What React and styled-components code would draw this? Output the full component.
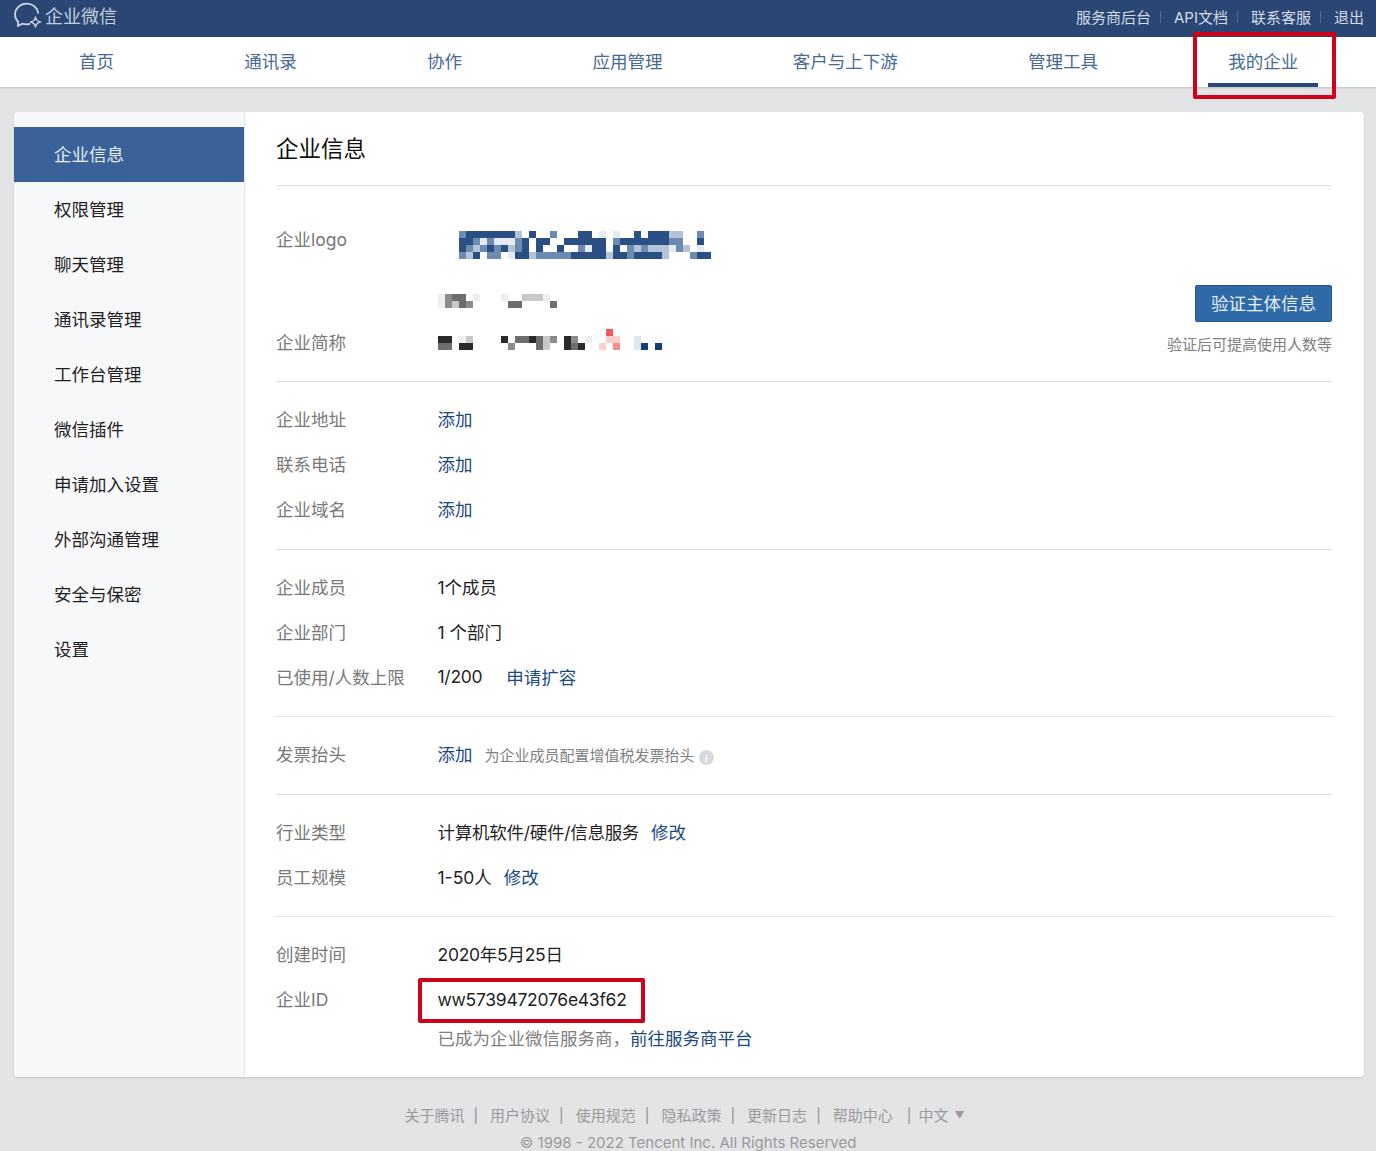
import React from 'react';
import styled, { createGlobalStyle } from 'styled-components';

const GlobalStyle = createGlobalStyle`
  html, body {
    margin: 0;
    padding: 0;
    height: 1151px;
    overflow: hidden;
    background: #e2e4e6;
    font-family: Inter, "Noto Sans CJK SC", sans-serif;
  }
`;

const Page = styled.div`
  height: 1151px;
  overflow: hidden;
`;

const TopBar = styled.div`
  height: 37px;
  box-sizing: border-box;
  background: #2a4674;
  display: flex;
  align-items: center;
  justify-content: space-between;
  padding: 0 12px 5px 14px;
`;

const Brand = styled.div`
  display: flex;
  align-items: center;
  gap: 3px;
  color: #c3cedd;
  font-size: 18px;
  margin-top: -2px;
`;

const TopLinks = styled.div`
  display: flex;
  align-items: center;
  color: #d5dde8;
  font-size: 15px;
`;

const TopSep = styled.span`
  width: 1px;
  height: 12px;
  background: #53698e;
  margin: 2px 13px 0 9px;
`;

const Nav = styled.div`
  height: 50px;
  background: #fff;
  box-shadow: 0 1px 2px rgba(0, 0, 0, 0.16);
  display: flex;
  gap: 90.3px;
  padding-left: 59px;
`;

const Tab = styled.div`
  position: relative;
  padding: 0 20px;
  height: 50px;
  box-sizing: border-box;
  line-height: 49px;
  font-size: 17.5px;
  color: #466a95;
  border-bottom: 4px solid ${props => (props.$active ? '#2a4674' : 'transparent')};
`;

const Annotation = styled.div`
  position: absolute;
  box-sizing: border-box;
  border: 4px solid #d0021b;
  border-radius: 2px;
  top: ${props => props.$top}px;
  left: ${props => props.$left}px;
  width: ${props => props.$width}px;
  height: ${props => props.$height}px;
`;

const Card = styled.div`
  margin: 25px 12px 0 14px;
  background: #fff;
  border-radius: 4px;
  box-shadow: 0 1px 2px rgba(0, 0, 0, 0.14);
  display: flex;
  overflow: hidden;
`;

const Sidebar = styled.div`
  width: 230px;
  flex-shrink: 0;
  box-sizing: content-box;
  padding-top: 15px;
  background: #f7f8fa;
  border-right: 1px solid #dfe3ea;
`;

const SideItem = styled.div`
  height: 55px;
  line-height: 56px;
  padding-left: 40px;
  font-size: 17.5px;
  color: ${props => (props.$active ? '#e6ecf4' : '#1f1f1f')};
  background: ${props => (props.$active ? '#3b6298' : 'transparent')};
`;

const Main = styled.div`
  flex: 1;
  padding: 0 32px 0 31px;
`;

const Title = styled.div`
  height: 74px;
  box-sizing: border-box;
  line-height: 74px;
  font-size: 22.5px;
  color: #111;
  border-bottom: 1px solid #dcdee1;
`;

const Section = styled.div`
  padding: 16px 0 ${props => props.$bottom ?? 16}px;
  border-bottom: 1px solid #e1e3e6;
`;

const ProfileSection = styled.div`
  display: flex;
  justify-content: space-between;
  padding: 32px 0 15px;
  border-bottom: 1px solid #e1e3e6;
`;

const Row = styled.div`
  display: flex;
  align-items: center;
  box-sizing: border-box;
  height: 45px;
  padding-bottom: 4px;
  font-size: 17.5px;
`;

const ShortNameRow = styled(Row)`
  margin-top: 13px;
`;

const Label = styled.div`
  width: 161.5px;
  flex-shrink: 0;
  color: #787878;
`;

const Value = styled.div`
  color: #1f1f1f;
  position: relative;
  letter-spacing: ${props => (props.$tight ? '-0.27px' : 'normal')};
`;

const IdValue = styled(Value)`
  margin-top: 2px;
`;

const Link = styled.a`
  color: #1b4a7f;
  margin-left: ${props => props.$left || 0}px;
`;

const Hint = styled.span`
  color: #808080;
  font-size: 15px;
  margin: 2px 0 0 12px;
`;

const InfoDot = styled.span`
  display: inline-flex;
  align-items: center;
  justify-content: center;
  width: 15px;
  height: 15px;
  margin-left: 4px;
  border-radius: 50%;
  background: #d7d9dc;
  color: #fff;
  font: italic bold 11px "Liberation Serif", serif;
  vertical-align: -1px;
`;

const LogoImage = styled.svg`
  display: block;
  flex-shrink: 0;
  align-self: flex-start;
  margin: ${props => props.$margin};
  filter: blur(0.3px);
`;

const Aside = styled.div`
  display: flex;
  flex-direction: column;
  align-items: flex-end;
  margin-top: 67px;
`;

const VerifyButton = styled.button`
  width: 137px;
  height: 37px;
  padding: 0 0 3px;
  background: #2f6aa8;
  border: 1px solid #25578e;
  border-radius: 2px;
  color: #e9f0f7;
  font-family: inherit;
  font-size: 17.5px;
`;

const AsideNote = styled.div`
  margin-top: 13px;
  line-height: 20px;
  font-size: 15px;
  color: #808080;
`;

const ProviderNote = styled.div`
  margin: 0 0 6px 161.5px;
  line-height: 32px;
  font-size: 17.5px;
  color: #808080;
`;

const LastSection = styled.div`
  padding: 16px 0 16px;
`;

const Footer = styled.div`
  padding-top: 29px;
  text-align: center;
  color: #9a9a9a;
  font-size: 15px;
  line-height: 20px;
`;

const FooterLinks = styled.div`
  display: flex;
  justify-content: center;
  align-items: center;
  padding-right: 7px;
`;

const FooterSep = styled.span`
  margin: 0 ${props => props.$right}px 0 ${props => props.$left}px;
  color: #8c8c8c;
  font-size: 14px;
`;

const Arrow = styled.span`
  margin-left: 6px;
  font-size: 10px;
  margin-top: -3px;
`;

const Copyright = styled.div`
  margin-top: 7px;
`;

const BLUES = { a: '#e6ebf2', b: '#b4c3d7', c: '#6c8bb0', d: '#2a4f85' };
const GRAYS = {
  a: '#eeeeee', b: '#c8c8c8', c: '#8c8c8c', d: '#6e6e6e', e: '#2a2a2a',
  p: '#fbcfca', q: '#f78d8a', r: '#f4575a', u: '#dfe8f1', v: '#123f73',
};

const LOGO_ROWS = [
  'cdddddddb.d..c...dd.a.a..d.dddbb..c.',
  'ddcacaaacd.dd..dddddd.cdddddddcc..d.',
  'dcbcdcdbcd.d..d..cadd.d.cbcbbbacb.a.',
  'cbd.cc.addbcccccdddddbddcddddb...cdd',
];
const NAME_ROWS = [
  'acdd.a...a..bbba.',
  'acbdc.....dd....d',
];
const SHORT_ROWS = [
  '........................r.......',
  'ee.ab....e.ddedbc.ec.a..pp..u...',
  'dd.ee.....c...db..ede..p.q..uv.v',
];

// pixelated (blurred out) content in the reference
const Mosaic = ({ rows, palette, margin }) => (
  <LogoImage $margin={margin} width={rows[0].length * 7} height={rows.length * 7} shapeRendering="crispEdges">
    {rows.map((row, y) =>
      row.split('').map((cell, x) =>
        palette[cell] ? <rect key={`${x}-${y}`} x={x * 7} y={y * 7} width="7" height="7" fill={palette[cell]} /> : null
      )
    )}
  </LogoImage>
);

const WeWorkLogo = () => (
  <svg width="28" height="26" viewBox="0 0 28 26" fill="none">
    <path
      d="M15.500 21.900C14.600 22.200 13.600 22.400 12.600 22.400c-1.500 0-2.900-.2-4.200-.7L3.900 24l.3-4.100C2.200 17.900 1 15.300 1 12.400 1 6.600 6.200 1.600 12.600 1.600c5.900 0 10.800 4 11.500 9.300"
      stroke="#c9d3e1"
      strokeWidth="1.800"
      strokeLinecap="round"
      strokeLinejoin="round"
    />
    <path
      d="M21.500 15c.4 2.800 1.800 4.300 5 5-3.200.7-4.600 2.200-5 5-.4-2.800-1.800-4.300-5-5 3.200-.7 4.600-2.200 5-5z"
      stroke="#c9d3e1"
      strokeWidth="1.400"
      strokeLinejoin="round"
    />
  </svg>
);

const SIDE_ITEMS = ['企业信息', '权限管理', '聊天管理', '通讯录管理', '工作台管理', '微信插件', '申请加入设置', '外部沟通管理', '安全与保密', '设置'];
const TABS = ['首页', '通讯录', '协作', '应用管理', '客户与上下游', '管理工具'];

export default function App() {
  return (
    <Page>
      <GlobalStyle />
      <TopBar>
        <Brand>
          <WeWorkLogo />
          <span>企业微信</span>
        </Brand>
        <TopLinks>
          <span>服务商后台</span>
          <TopSep />
          <span>API文档</span>
          <TopSep />
          <span>联系客服</span>
          <TopSep />
          <span>退出</span>
        </TopLinks>
      </TopBar>

      <Nav>
        {TABS.map(tab => <Tab key={tab}>{tab}</Tab>)}
        <Tab $active>
          我的企业
          <Annotation $top={-5} $left={-15} $width={143} $height={67} />
        </Tab>
      </Nav>

      <Card>
        <Sidebar>
          {SIDE_ITEMS.map((item, i) => <SideItem key={item} $active={i === 0}>{item}</SideItem>)}
        </Sidebar>
        <Main>
          <Title>企业信息</Title>

          <ProfileSection>
            <div>
              <Row>
                <Label>企业logo</Label>
                <Mosaic rows={LOGO_ROWS} palette={BLUES} margin="13px 0 0 21px" />
              </Row>
              <Mosaic rows={NAME_ROWS} palette={GRAYS} margin="31px 0 0 162px" />
              <ShortNameRow>
                <Label>企业简称</Label>
                <Mosaic rows={SHORT_ROWS} palette={GRAYS} margin="8px 0 0 0" />
              </ShortNameRow>
            </div>
            <Aside>
              <VerifyButton>验证主体信息</VerifyButton>
              <AsideNote>验证后可提高使用人数等</AsideNote>
            </Aside>
          </ProfileSection>

          <Section>
            <Row><Label>企业地址</Label><Link>添加</Link></Row>
            <Row><Label>联系电话</Label><Link>添加</Link></Row>
            <Row><Label>企业域名</Label><Link>添加</Link></Row>
          </Section>

          <Section $bottom={15}>
            <Row><Label>企业成员</Label><Value>1个成员</Value></Row>
            <Row><Label>企业部门</Label><Value>1 个部门</Value></Row>
            <Row>
              <Label>已使用/人数上限</Label>
              <Value $tight>1/200</Value>
              <Link $left={24}>申请扩容</Link>
            </Row>
          </Section>

          <Section>
            <Row>
              <Label>发票抬头</Label>
              <Link>添加</Link>
              <Hint>为企业成员配置增值税发票抬头<InfoDot>i</InfoDot></Hint>
            </Row>
          </Section>

          <Section $bottom={15}>
            <Row>
              <Label>行业类型</Label>
              <Value $tight>计算机软件/硬件/信息服务</Value>
              <Link $left={12}>修改</Link>
            </Row>
            <Row>
              <Label>员工规模</Label>
              <Value>1-50人</Value>
              <Link $left={12}>修改</Link>
            </Row>
          </Section>

          <LastSection>
            <Row><Label>创建时间</Label><Value $tight>2020年5月25日</Value></Row>
            <Row>
              <Label>企业ID</Label>
              <IdValue $tight>
                ww5739472076e43f62
                <Annotation $top={-11} $left={-20} $width={227} $height={45} />
              </IdValue>
            </Row>
            <ProviderNote>已成为企业微信服务商，<Link>前往服务商平台</Link></ProviderNote>
          </LastSection>
        </Main>
      </Card>

      <Footer>
        <FooterLinks>
          <span>关于腾讯</span><FooterSep $left={9} $right={12}>|</FooterSep>
          <span>用户协议</span><FooterSep $left={9} $right={12}>|</FooterSep>
          <span>使用规范</span><FooterSep $left={9} $right={12}>|</FooterSep>
          <span>隐私政策</span><FooterSep $left={9} $right={12}>|</FooterSep>
          <span>更新日志</span><FooterSep $left={9} $right={12}>|</FooterSep>
          <span>帮助中心</span><FooterSep $left={14} $right={7}>|</FooterSep>
          <span>中文</span><Arrow>▼</Arrow>
        </FooterLinks>
        <Copyright>© 1998 - 2022 Tencent Inc. All Rights Reserved</Copyright>
      </Footer>
    </Page>
  );
}
